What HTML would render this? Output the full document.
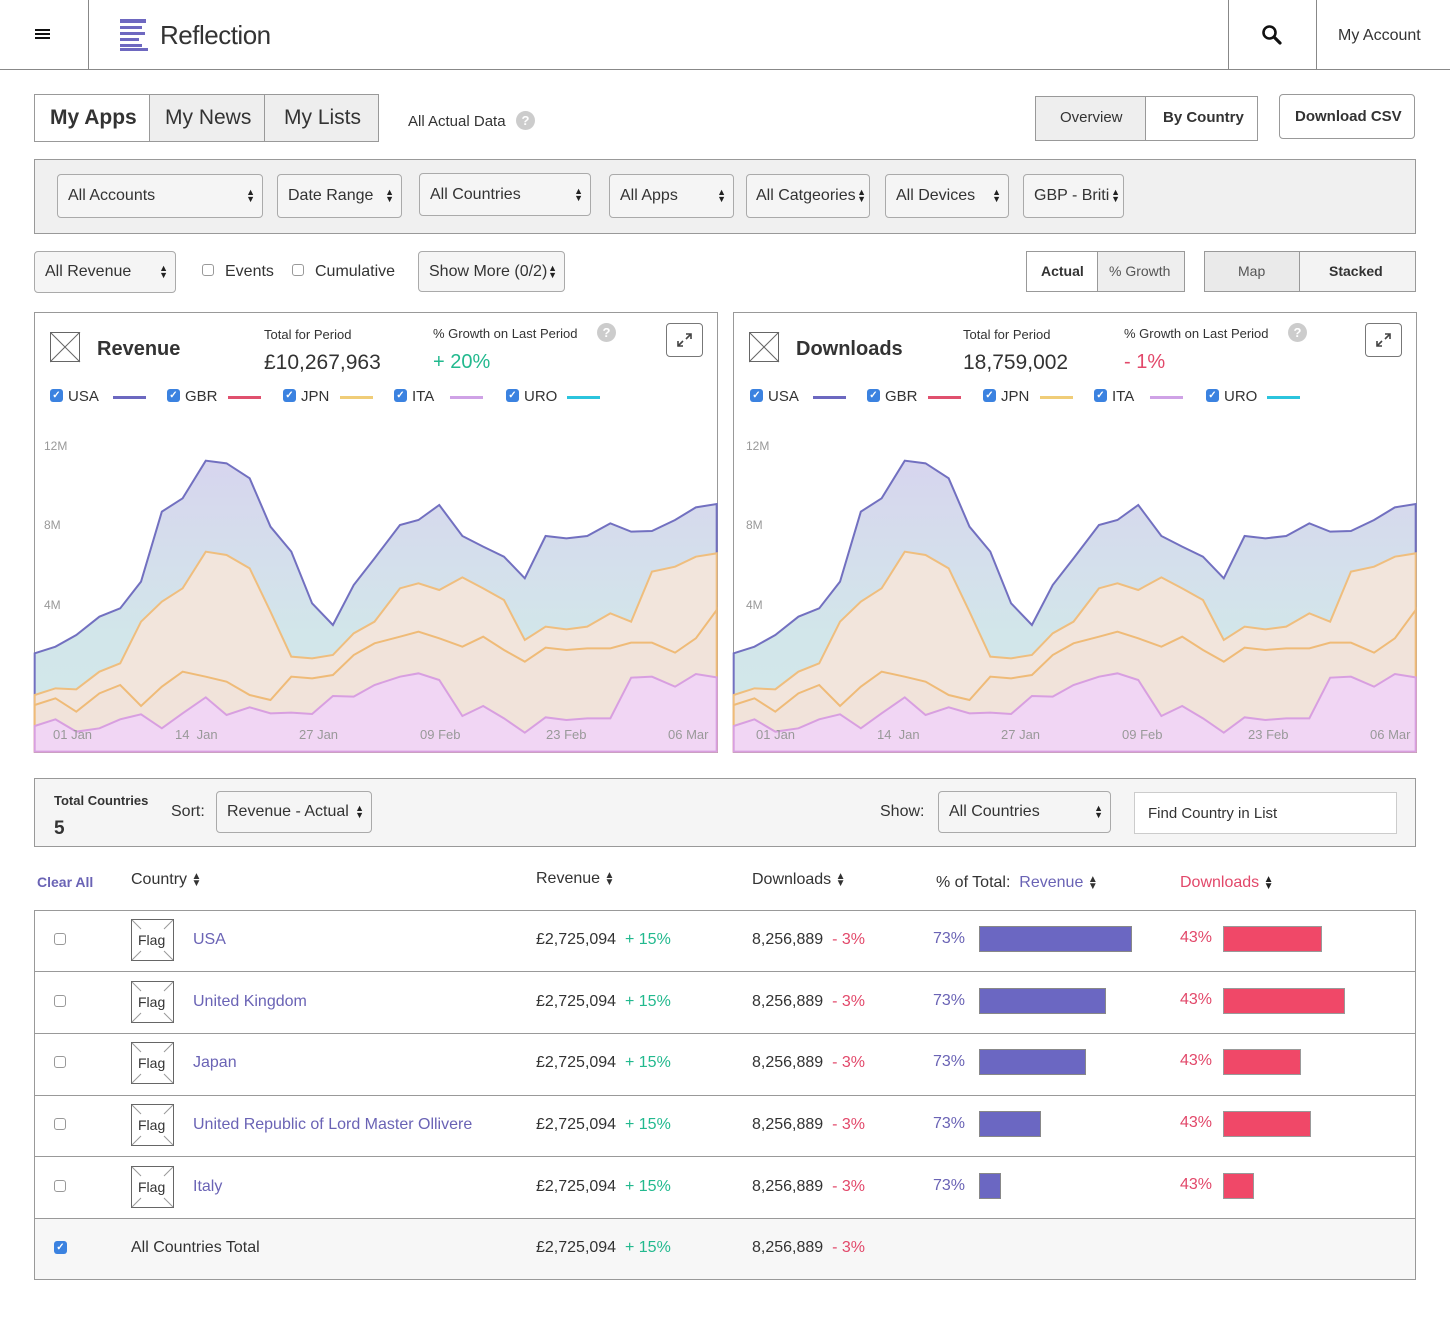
<!DOCTYPE html>
<html><head><meta charset="utf-8"><style>
*{box-sizing:border-box;margin:0;padding:0}
body{width:1450px;height:1318px;background:#fff;font-family:"Liberation Sans",Arial,sans-serif;color:#333;position:relative;overflow:hidden}
.a{position:absolute}
.t{position:absolute;white-space:nowrap;line-height:1}
.box{position:absolute;border:1px solid #999}
.sel{position:absolute;border:1px solid #aaa;border-radius:4px;background:#f5f5f5;font-size:16px;padding-left:10px;display:flex;align-items:center}
.arr{position:absolute;right:7px;top:50%;transform:translateY(-50%);font-size:9px;line-height:7px;color:#222;text-align:center}
.cb{position:absolute;width:13px;height:13px;border-radius:3px;background:#3b82e0;color:#fff;font-size:10px;line-height:13px;text-align:center;font-weight:bold}
.ecb{position:absolute;width:12px;height:12px;border:1px solid #999;border-radius:3px;background:#fff}
.q{position:absolute;width:19px;height:19px;border-radius:50%;background:#ccc;color:#fff;font-size:13px;font-weight:bold;text-align:center;line-height:19px}
.flag{position:absolute;width:43px;height:42px;border:1px solid #666;background:#fff}
.g{color:#22b98e}.r{color:#e2486a}.p{color:#6a63b5}
</style></head><body>
<!-- header -->
<div class="a" style="left:0;top:69px;width:1450px;height:1px;background:#888"></div>
<div class="a" style="left:88px;top:0;width:1px;height:70px;background:#888"></div>
<div class="a" style="left:1228px;top:0;width:1px;height:70px;background:#888"></div>
<div class="a" style="left:1316px;top:0;width:1px;height:70px;background:#888"></div>
<div class="a" style="left:35px;top:29px;width:15px;height:2px;background:#111;box-shadow:0 4px 0 #111,0 8px 0 #111"></div>
<div class="a" style="left:120px;top:19px;width:26px;height:4px;background:#6e68c0"></div>
<div class="a" style="left:120px;top:26px;width:22px;height:3px;background:#6e68c0"></div>
<div class="a" style="left:120px;top:32px;width:25px;height:3px;background:#6e68c0"></div>
<div class="a" style="left:120px;top:38px;width:19px;height:3px;background:#6e68c0"></div>
<div class="a" style="left:120px;top:44px;width:22px;height:3px;background:#6e68c0"></div>
<div class="a" style="left:120px;top:48px;width:28px;height:3px;background:#6e68c0"></div>
<div class="t" style="left:160px;top:22px;font-size:26px;color:#333;letter-spacing:-0.5px">Reflection</div>
<svg class="a" style="left:1261px;top:24px" width="22" height="22" viewBox="0 0 22 22"><circle cx="8.5" cy="8.5" r="6" fill="none" stroke="#111" stroke-width="2.6"/><line x1="13" y1="13" x2="19" y2="19" stroke="#111" stroke-width="3.2" stroke-linecap="round"/></svg>
<div class="t" style="left:1338px;top:28px;font-size:16px">My Account</div>

<!-- tabs -->
<div class="box" style="left:34px;top:94px;width:345px;height:48px;background:#eee"></div>
<div class="a" style="left:35px;top:95px;width:115px;height:46px;background:#fff;border-right:1px solid #999"></div>
<div class="a" style="left:264px;top:95px;width:1px;height:46px;background:#999"></div>
<div class="t" style="left:50px;top:107px;font-size:21px;font-weight:bold">My Apps</div>
<div class="t" style="left:165px;top:107px;font-size:21px">My News</div>
<div class="t" style="left:284px;top:107px;font-size:21px">My Lists</div>
<div class="t" style="left:408px;top:114px;font-size:15px">All Actual Data</div>
<div class="q" style="left:516px;top:111px">?</div>
<div class="box" style="left:1035px;top:96px;width:223px;height:45px;background:#eee"></div>
<div class="a" style="left:1145px;top:97px;width:112px;height:43px;background:#fff;border-left:1px solid #999"></div>
<div class="t" style="left:1060px;top:110px;font-size:15px">Overview</div>
<div class="t" style="left:1163px;top:110px;font-size:15px;font-weight:bold">By Country</div>
<div class="box" style="left:1279px;top:94px;width:136px;height:45px;border-radius:4px"></div>
<div class="t" style="left:1295px;top:109px;font-size:15px;font-weight:bold">Download CSV</div>

<!-- filter bar -->
<div class="box" style="left:34px;top:159px;width:1382px;height:75px;background:#f0f0f0"></div>
<div class="sel" style="left:57px;top:174px;width:206px;height:44px">All Accounts<div class="arr">▲<br>▼</div></div>
<div class="sel" style="left:277px;top:174px;width:125px;height:44px">Date Range<div class="arr">▲<br>▼</div></div>
<div class="sel" style="left:419px;top:173px;width:172px;height:43px">All Countries<div class="arr">▲<br>▼</div></div>
<div class="sel" style="left:609px;top:174px;width:125px;height:44px">All Apps<div class="arr">▲<br>▼</div></div>
<div class="sel" style="left:746px;top:174px;width:124px;height:44px;padding-left:9px">All Catgeories<div class="arr" style="right:3px">▲<br>▼</div></div>
<div class="sel" style="left:885px;top:174px;width:124px;height:44px">All Devices<div class="arr">▲<br>▼</div></div>
<div class="sel" style="left:1023px;top:174px;width:101px;height:44px">GBP - Briti<div class="arr" style="right:3px">▲<br>▼</div></div>

<!-- row 2 -->
<div class="sel" style="left:34px;top:251px;width:142px;height:42px">All Revenue<div class="arr">▲<br>▼</div></div>
<div class="ecb" style="left:202px;top:264px"></div><div class="t" style="left:225px;top:264px;font-size:16px">Events</div>
<div class="ecb" style="left:292px;top:264px"></div><div class="t" style="left:315px;top:264px;font-size:16px">Cumulative</div>
<div class="sel" style="left:418px;top:251px;width:147px;height:41px">Show More (0/2)<div class="arr">▲<br>▼</div></div>
<div class="box" style="left:1026px;top:251px;width:159px;height:41px;background:#eee"></div>
<div class="a" style="left:1027px;top:252px;width:71px;height:39px;background:#fff;border-right:1px solid #999"></div>
<div class="t" style="left:1041px;top:264px;font-size:14px;font-weight:bold">Actual</div>
<div class="t" style="left:1109px;top:264px;font-size:14px;color:#555">% Growth</div>
<div class="box" style="left:1204px;top:251px;width:212px;height:41px;background:#f3f3f3"></div>
<div class="a" style="left:1205px;top:252px;width:95px;height:39px;background:#eaeaea;border-right:1px solid #999"></div>
<div class="t" style="left:1238px;top:264px;font-size:14px;color:#555">Map</div>
<div class="t" style="left:1329px;top:264px;font-size:14px;font-weight:bold">Stacked</div>

<!-- chart panels -->
<div id="p1">
<div class="box" style="left:34px;top:312px;width:684px;height:441px"></div>
<svg class="a" style="left:0;top:420px" width="725" height="340" viewBox="0 0 1568 1020" preserveAspectRatio="none">
<defs><linearGradient id="gA" x1="0" y1="0" x2="0" y2="1"><stop offset="0" stop-color="#d7d5ee"/><stop offset="0.6" stop-color="#d2e6ea"/><stop offset="1" stop-color="#d2e8ea"/></linearGradient></defs>
<path fill="url(#gA)" stroke="#7270c0" stroke-width="2" vector-effect="non-scaling-stroke" d="M75,700 L120,680 165,645 215,590 260,565 305,485 350,275 395,235 445,122 490,130 540,175 585,320 630,395 675,550 720,615 765,495 810,415 865,315 905,300 950,255 1000,348 1045,380 1090,410 1135,475 1180,348 1225,355 1270,348 1320,310 1365,335 1410,333 1460,300 1505,262 1550,252 L1550,995 L75,995Z"/>
<path fill="#f2e5dc" stroke="#efbe7e" stroke-width="2" vector-effect="non-scaling-stroke" d="M75,825 L120,805 165,808 215,755 260,730 305,605 350,545 395,505 445,395 490,405 540,445 585,575 630,710 675,715 720,705 765,640 810,605 865,505 905,490 950,510 1000,472 1045,505 1090,540 1135,660 1180,620 1225,628 1270,620 1320,580 1365,605 1410,455 1460,440 1505,410 1550,400 L1550,995 L75,995Z"/>
<path fill="#f1e3da" stroke="#efbb78" stroke-width="2" vector-effect="non-scaling-stroke" d="M75,855 L120,835 165,875 215,820 260,795 305,858 350,800 395,755 445,770 490,785 540,825 585,840 630,770 675,775 720,765 765,705 810,670 865,650 905,635 950,655 1000,680 1045,650 1090,690 1135,725 1180,683 1225,690 1270,685 1320,685 1365,668 1410,668 1460,698 1505,655 1550,570 L1550,995 L75,995Z"/>
<path fill="#f1d6f4" stroke="#d89fe0" stroke-width="2" vector-effect="non-scaling-stroke" d="M75,918 L120,898 165,935 215,925 260,898 305,883 350,925 395,880 445,832 490,885 540,862 585,880 630,878 675,882 720,828 765,830 810,795 865,770 905,760 950,780 1000,888 1045,858 1090,895 1135,938 1180,892 1225,900 1270,895 1320,895 1365,773 1410,770 1460,800 1505,762 1550,772 L1550,995 L75,995Z"/>
</svg>
<div class="t" style="left:44px;top:440px;font-size:12px;color:#999">12M</div>
<div class="t" style="left:44px;top:519px;font-size:12px;color:#999">8M</div>
<div class="t" style="left:44px;top:599px;font-size:12px;color:#999">4M</div>
<div class="t" style="left:53px;top:728px;font-size:13px;color:#999">01 Jan</div>
<div class="t" style="left:175px;top:728px;font-size:13px;color:#999">14&nbsp; Jan</div>
<div class="t" style="left:299px;top:728px;font-size:13px;color:#999">27 Jan</div>
<div class="t" style="left:420px;top:728px;font-size:13px;color:#999">09 Feb</div>
<div class="t" style="left:546px;top:728px;font-size:13px;color:#999">23 Feb</div>
<div class="t" style="left:668px;top:728px;font-size:13px;color:#999">06 Mar</div>
<svg class="a" style="left:50px;top:332px" width="31" height="31"><rect x="0.5" y="0.5" width="29" height="29" fill="#fff" stroke="#666"/><line x1="0" y1="0" x2="30" y2="30" stroke="#666"/><line x1="30" y1="0" x2="0" y2="30" stroke="#666"/></svg>
<div class="t" style="left:97px;top:339px;font-size:20px;font-weight:bold">Revenue</div>
<div class="t" style="left:264px;top:328px;font-size:13px">Total for Period</div>
<div class="t" style="left:264px;top:352px;font-size:21px">£10,267,963</div>
<div class="t" style="left:433px;top:327px;font-size:13px">% Growth on Last Period</div>
<div class="q" style="left:597px;top:323px">?</div>
<div class="t g" style="left:433px;top:352px;font-size:20px">+ 20%</div>
<div class="a" style="left:666px;top:323px;width:37px;height:34px;border:1px solid #777;border-radius:4px"></div>
<svg class="a" style="left:675px;top:331px" width="19" height="18"><path d="M11 3h5v5M16 3l-5 5M8 15H3v-5M3 15l5-5" fill="none" stroke="#444" stroke-width="1.6"/></svg>
<div class="cb" style="left:50px;top:389px">✓</div><div class="t" style="left:68px;top:389px;font-size:15px">USA</div><div class="a" style="left:113px;top:396px;width:33px;height:3px;background:#6c68c0"></div>
<div class="cb" style="left:167px;top:389px">✓</div><div class="t" style="left:185px;top:389px;font-size:15px">GBR</div><div class="a" style="left:228px;top:396px;width:33px;height:3px;background:#e0506e"></div>
<div class="cb" style="left:283px;top:389px">✓</div><div class="t" style="left:301px;top:389px;font-size:15px">JPN</div><div class="a" style="left:340px;top:396px;width:33px;height:3px;background:#f0cd78"></div>
<div class="cb" style="left:394px;top:389px">✓</div><div class="t" style="left:412px;top:389px;font-size:15px">ITA</div><div class="a" style="left:450px;top:396px;width:33px;height:3px;background:#cfa2e6"></div>
<div class="cb" style="left:506px;top:389px">✓</div><div class="t" style="left:524px;top:389px;font-size:15px">URO</div><div class="a" style="left:567px;top:396px;width:33px;height:3px;background:#2bc4dd"></div>
</div>

<div id="p2">
<div class="box" style="left:733px;top:312px;width:684px;height:441px"></div>
<svg class="a" style="left:699px;top:420px" width="725" height="340" viewBox="0 0 1568 1020" preserveAspectRatio="none">
<path fill="url(#gA)" stroke="#7270c0" stroke-width="2" vector-effect="non-scaling-stroke" d="M75,700 L120,680 165,645 215,590 260,565 305,485 350,275 395,235 445,122 490,130 540,175 585,320 630,395 675,550 720,615 765,495 810,415 865,315 905,300 950,255 1000,348 1045,380 1090,410 1135,475 1180,348 1225,355 1270,348 1320,310 1365,335 1410,333 1460,300 1505,262 1550,252 L1550,995 L75,995Z"/>
<path fill="#f2e5dc" stroke="#efbe7e" stroke-width="2" vector-effect="non-scaling-stroke" d="M75,825 L120,805 165,808 215,755 260,730 305,605 350,545 395,505 445,395 490,405 540,445 585,575 630,710 675,715 720,705 765,640 810,605 865,505 905,490 950,510 1000,472 1045,505 1090,540 1135,660 1180,620 1225,628 1270,620 1320,580 1365,605 1410,455 1460,440 1505,410 1550,400 L1550,995 L75,995Z"/>
<path fill="#f1e3da" stroke="#efbb78" stroke-width="2" vector-effect="non-scaling-stroke" d="M75,855 L120,835 165,875 215,820 260,795 305,858 350,800 395,755 445,770 490,785 540,825 585,840 630,770 675,775 720,765 765,705 810,670 865,650 905,635 950,655 1000,680 1045,650 1090,690 1135,725 1180,683 1225,690 1270,685 1320,685 1365,668 1410,668 1460,698 1505,655 1550,570 L1550,995 L75,995Z"/>
<path fill="#f1d6f4" stroke="#d89fe0" stroke-width="2" vector-effect="non-scaling-stroke" d="M75,918 L120,898 165,935 215,925 260,898 305,883 350,925 395,880 445,832 490,885 540,862 585,880 630,878 675,882 720,828 765,830 810,795 865,770 905,760 950,780 1000,888 1045,858 1090,895 1135,938 1180,892 1225,900 1270,895 1320,895 1365,773 1410,770 1460,800 1505,762 1550,772 L1550,995 L75,995Z"/>
</svg>
<div class="t" style="left:746px;top:440px;font-size:12px;color:#999">12M</div>
<div class="t" style="left:746px;top:519px;font-size:12px;color:#999">8M</div>
<div class="t" style="left:746px;top:599px;font-size:12px;color:#999">4M</div>
<div class="t" style="left:756px;top:728px;font-size:13px;color:#999">01 Jan</div>
<div class="t" style="left:877px;top:728px;font-size:13px;color:#999">14&nbsp; Jan</div>
<div class="t" style="left:1001px;top:728px;font-size:13px;color:#999">27 Jan</div>
<div class="t" style="left:1122px;top:728px;font-size:13px;color:#999">09 Feb</div>
<div class="t" style="left:1248px;top:728px;font-size:13px;color:#999">23 Feb</div>
<div class="t" style="left:1370px;top:728px;font-size:13px;color:#999">06 Mar</div>
<svg class="a" style="left:749px;top:332px" width="31" height="31"><rect x="0.5" y="0.5" width="29" height="29" fill="#fff" stroke="#666"/><line x1="0" y1="0" x2="30" y2="30" stroke="#666"/><line x1="30" y1="0" x2="0" y2="30" stroke="#666"/></svg>
<div class="t" style="left:796px;top:339px;font-size:20px;font-weight:bold">Downloads</div>
<div class="t" style="left:963px;top:328px;font-size:13px">Total for Period</div>
<div class="t" style="left:963px;top:352px;font-size:21px">18,759,002</div>
<div class="t" style="left:1124px;top:327px;font-size:13px">% Growth on Last Period</div>
<div class="q" style="left:1288px;top:323px">?</div>
<div class="t r" style="left:1124px;top:352px;font-size:20px">- 1%</div>
<div class="a" style="left:1365px;top:323px;width:37px;height:34px;border:1px solid #777;border-radius:4px"></div>
<svg class="a" style="left:1374px;top:331px" width="19" height="18"><path d="M11 3h5v5M16 3l-5 5M8 15H3v-5M3 15l5-5" fill="none" stroke="#444" stroke-width="1.6"/></svg>
<div class="cb" style="left:750px;top:389px">✓</div><div class="t" style="left:768px;top:389px;font-size:15px">USA</div><div class="a" style="left:813px;top:396px;width:33px;height:3px;background:#6c68c0"></div>
<div class="cb" style="left:867px;top:389px">✓</div><div class="t" style="left:885px;top:389px;font-size:15px">GBR</div><div class="a" style="left:928px;top:396px;width:33px;height:3px;background:#e0506e"></div>
<div class="cb" style="left:983px;top:389px">✓</div><div class="t" style="left:1001px;top:389px;font-size:15px">JPN</div><div class="a" style="left:1040px;top:396px;width:33px;height:3px;background:#f0cd78"></div>
<div class="cb" style="left:1094px;top:389px">✓</div><div class="t" style="left:1112px;top:389px;font-size:15px">ITA</div><div class="a" style="left:1150px;top:396px;width:33px;height:3px;background:#cfa2e6"></div>
<div class="cb" style="left:1206px;top:389px">✓</div><div class="t" style="left:1224px;top:389px;font-size:15px">URO</div><div class="a" style="left:1267px;top:396px;width:33px;height:3px;background:#2bc4dd"></div>
</div>

<!-- table toolbar -->
<div class="box" style="left:34px;top:778px;width:1382px;height:69px;background:#f5f5f5"></div>
<div class="t" style="left:54px;top:794px;font-size:13px;font-weight:bold">Total Countries</div>
<div class="t" style="left:54px;top:819px;font-size:19px;font-weight:bold">5</div>
<div class="t" style="left:171px;top:804px;font-size:16px">Sort:</div>
<div class="sel" style="left:216px;top:791px;width:156px;height:42px">Revenue - Actual<div class="arr">▲<br>▼</div></div>
<div class="t" style="left:880px;top:804px;font-size:16px">Show:</div>
<div class="sel" style="left:938px;top:791px;width:173px;height:42px">All Countries<div class="arr">▲<br>▼</div></div>
<div class="a" style="left:1134px;top:792px;width:263px;height:42px;border:1px solid #ccc;background:#fff"></div>
<div class="t" style="left:1148px;top:806px;font-size:15px">Find Country in List</div>

<!-- table headers -->
<div class="t" style="left:37px;top:875px;font-size:14px;font-weight:bold;color:#6a63b5">Clear All</div>
<div class="t" style="left:131px;top:872px;font-size:16px">Country <span style="font-size:10px;display:inline-block;line-height:7px;vertical-align:middle">▲<br>▼</span></div>
<div class="t" style="left:536px;top:871px;font-size:16px">Revenue <span style="font-size:10px;display:inline-block;line-height:7px;vertical-align:middle">▲<br>▼</span></div>
<div class="t" style="left:752px;top:872px;font-size:16px">Downloads <span style="font-size:10px;display:inline-block;line-height:7px;vertical-align:middle">▲<br>▼</span></div>
<div class="t" style="left:936px;top:875px;font-size:16px">% of Total: <span class="p">&nbsp;Revenue</span> <span style="font-size:10px;display:inline-block;line-height:7px;vertical-align:middle">▲<br>▼</span></div>
<div class="t r" style="left:1180px;top:875px;font-size:16px">Downloads <span style="font-size:10px;display:inline-block;line-height:7px;vertical-align:middle;color:#222">▲<br>▼</span></div>

<!-- table -->
<div class="box" style="left:34px;top:910px;width:1382px;height:370px"></div>
<div class="a" style="left:35px;top:1219px;width:1380px;height:60px;background:#f7f7f7"></div>
<div class="a" style="left:35px;top:971px;width:1380px;height:1px;background:#999"></div>
<div class="a" style="left:35px;top:1033px;width:1380px;height:1px;background:#999"></div>
<div class="a" style="left:35px;top:1095px;width:1380px;height:1px;background:#999"></div>
<div class="a" style="left:35px;top:1156px;width:1380px;height:1px;background:#999"></div>
<div class="a" style="left:35px;top:1218px;width:1380px;height:1px;background:#999"></div>

<!-- rows generated inline -->
<div id="rows"></div>
<div class="ecb" style="left:54px;top:933px"></div>
<div class="ecb" style="left:54px;top:995px"></div>
<div class="ecb" style="left:54px;top:1056px"></div>
<div class="ecb" style="left:54px;top:1118px"></div>
<div class="ecb" style="left:54px;top:1180px"></div>
<div class="cb" style="left:54px;top:1241px">✓</div>

<svg class="a" style="left:131px;top:919px" width="44" height="300">
<g fill="#fff" stroke="#666"><rect x="0.5" y="0.5" width="42" height="41"/><rect x="0.5" y="62.5" width="42" height="41"/><rect x="0.5" y="123.5" width="42" height="41"/><rect x="0.5" y="185.5" width="42" height="41"/><rect x="0.5" y="247.5" width="42" height="41"/></g>
<g stroke="#999"><path d="M1 1l9 9M42 1l-9 9M1 41l9-9M42 41l-9-9"/><path d="M1 63l9 9M42 63l-9 9M1 103l9-9M42 103l-9-9"/><path d="M1 124l9 9M42 124l-9 9M1 164l9-9M42 164l-9-9"/><path d="M1 186l9 9M42 186l-9 9M1 226l9-9M42 226l-9-9"/><path d="M1 248l9 9M42 248l-9 9M1 288l9-9M42 288l-9-9"/></g>
<g font-family="Liberation Sans, sans-serif" font-size="14" fill="#333"><text x="7" y="26">Flag</text><text x="7" y="88">Flag</text><text x="7" y="149">Flag</text><text x="7" y="211">Flag</text><text x="7" y="273">Flag</text></g>
</svg>

<div class="t p" style="left:193px;top:932px;font-size:16px">USA</div>
<div class="t p" style="left:193px;top:994px;font-size:16px">United Kingdom</div>
<div class="t p" style="left:193px;top:1055px;font-size:16px">Japan</div>
<div class="t p" style="left:193px;top:1117px;font-size:16px">United Republic of Lord Master Ollivere</div>
<div class="t p" style="left:193px;top:1179px;font-size:16px">Italy</div>
<div class="t" style="left:131px;top:1240px;font-size:16px">All Countries Total</div>

<div class="t" style="left:536px;top:932px;font-size:16px">£2,725,094 <span class="g">&nbsp;+ 15%</span></div>
<div class="t" style="left:536px;top:994px;font-size:16px">£2,725,094 <span class="g">&nbsp;+ 15%</span></div>
<div class="t" style="left:536px;top:1055px;font-size:16px">£2,725,094 <span class="g">&nbsp;+ 15%</span></div>
<div class="t" style="left:536px;top:1117px;font-size:16px">£2,725,094 <span class="g">&nbsp;+ 15%</span></div>
<div class="t" style="left:536px;top:1179px;font-size:16px">£2,725,094 <span class="g">&nbsp;+ 15%</span></div>
<div class="t" style="left:536px;top:1240px;font-size:16px">£2,725,094 <span class="g">&nbsp;+ 15%</span></div>

<div class="t" style="left:752px;top:932px;font-size:16px">8,256,889 <span class="r">&nbsp;- 3%</span></div>
<div class="t" style="left:752px;top:994px;font-size:16px">8,256,889 <span class="r">&nbsp;- 3%</span></div>
<div class="t" style="left:752px;top:1055px;font-size:16px">8,256,889 <span class="r">&nbsp;- 3%</span></div>
<div class="t" style="left:752px;top:1117px;font-size:16px">8,256,889 <span class="r">&nbsp;- 3%</span></div>
<div class="t" style="left:752px;top:1179px;font-size:16px">8,256,889 <span class="r">&nbsp;- 3%</span></div>
<div class="t" style="left:752px;top:1240px;font-size:16px">8,256,889 <span class="r">&nbsp;- 3%</span></div>

<div class="t p" style="left:933px;top:931px;font-size:16px">73%</div>
<div class="t p" style="left:933px;top:993px;font-size:16px">73%</div>
<div class="t p" style="left:933px;top:1054px;font-size:16px">73%</div>
<div class="t p" style="left:933px;top:1116px;font-size:16px">73%</div>
<div class="t p" style="left:933px;top:1178px;font-size:16px">73%</div>
<div class="a" style="left:979px;top:926px;width:153px;height:26px;background:#6b67c2;border:1px solid #888"></div>
<div class="a" style="left:979px;top:988px;width:127px;height:26px;background:#6b67c2;border:1px solid #888"></div>
<div class="a" style="left:979px;top:1049px;width:107px;height:26px;background:#6b67c2;border:1px solid #888"></div>
<div class="a" style="left:979px;top:1111px;width:62px;height:26px;background:#6b67c2;border:1px solid #888"></div>
<div class="a" style="left:979px;top:1173px;width:22px;height:26px;background:#6b67c2;border:1px solid #888"></div>

<div class="t r" style="left:1180px;top:930px;font-size:16px">43%</div>
<div class="t r" style="left:1180px;top:992px;font-size:16px">43%</div>
<div class="t r" style="left:1180px;top:1053px;font-size:16px">43%</div>
<div class="t r" style="left:1180px;top:1115px;font-size:16px">43%</div>
<div class="t r" style="left:1180px;top:1177px;font-size:16px">43%</div>
<div class="a" style="left:1223px;top:926px;width:99px;height:26px;background:#f04868;border:1px solid #999"></div>
<div class="a" style="left:1223px;top:988px;width:122px;height:26px;background:#f04868;border:1px solid #999"></div>
<div class="a" style="left:1223px;top:1049px;width:78px;height:26px;background:#f04868;border:1px solid #999"></div>
<div class="a" style="left:1223px;top:1111px;width:88px;height:26px;background:#f04868;border:1px solid #999"></div>
<div class="a" style="left:1223px;top:1173px;width:31px;height:26px;background:#f04868;border:1px solid #999"></div>
</body></html>
